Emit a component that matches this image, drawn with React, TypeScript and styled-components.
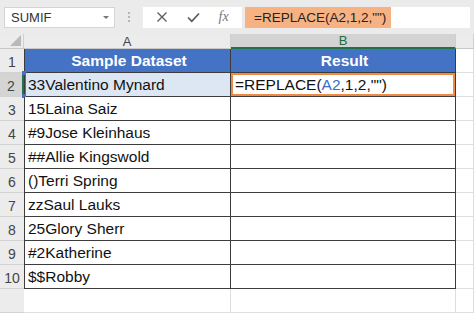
import React from 'react'
import styled, {createGlobalStyle} from 'styled-components'

const GlobalStyle = createGlobalStyle`
  html, body {
    margin: 0;
    padding: 0;
    background: #ffffff;
    font-family: "Liberation Sans", Arial, sans-serif;
  }
`

const Page = styled.div`
  width: 474px;
  height: 313px;
  overflow: hidden;
  display: flex;
  flex-direction: column;
  background: #ffffff;
`

const Toolbar = styled.div`
  height: 40px;
  display: flex;
  align-items: center;
  padding: 0 4px;
  box-sizing: border-box;
  background: #ebebeb;
`

const NameBox = styled.div`
  width: 111px;
  height: 21px;
  box-sizing: border-box;
  display: flex;
  align-items: center;
  justify-content: space-between;
  padding: 0 5px 0 6px;
  background: #ffffff;
  border: 1px solid #d4d4d4;
  font-size: 13px;
  color: #333333;
`

const Caret = styled.span`
  width: 0;
  height: 0;
  border-left: 3px solid transparent;
  border-right: 3px solid transparent;
  border-top: 3px solid #777777;
`

const Dots = styled.div`
  width: 28px;
  display: flex;
  flex-direction: column;
  align-items: center;
  gap: 2px;

  span {
    width: 2px;
    height: 2px;
    background: #b5b5b5;
  }
`

const FxButtons = styled.div`
  width: 99px;
  height: 21px;
  display: flex;
  align-items: center;
  justify-content: space-around;
  padding: 0 4px;
  box-sizing: border-box;
  background: #ffffff;
`

const FxLabel = styled.span`
  font-family: "Liberation Serif", "Times New Roman", serif;
  font-style: italic;
  font-size: 14px;
  color: #777777;
`

const FormulaBar = styled.div`
  flex: 1;
  height: 21px;
  margin-left: 3px;
  display: flex;
  align-items: stretch;
  background: #ffffff;
`

const FormulaText = styled.div`
  display: flex;
  align-items: center;
  padding: 0 5px 0 9px;
  background: #f7b283;
  font-size: 13.5px;
  color: #222222;
  white-space: nowrap;
`

const Sheet = styled.div`
  display: grid;
  grid-template-columns: 24px 207px 225px 1fr;
  grid-template-rows: 15px repeat(11, 24px);
`

const Corner = styled.div`
  background: #ececec;
  border-right: 1px solid #d0d0d0;
  border-bottom: 1px solid #c8c8c8;
  box-sizing: border-box;
  position: relative;

  &::after {
    content: '';
    position: absolute;
    right: 2px;
    bottom: 2px;
    width: 0;
    height: 0;
    border-left: 11px solid transparent;
    border-bottom: 11px solid #b9b9b9;
  }
`

const ColHead = styled.div<{$active?: boolean}>`
  display: flex;
  align-items: center;
  justify-content: center;
  box-sizing: border-box;
  font-size: 13px;
  background: ${p => (p.$active ? '#d3d3d3' : '#ececec')};
  color: ${p => (p.$active ? '#1e6b41' : '#444444')};
  border-right: 1px solid #cfcfcf;
  border-bottom: ${p => (p.$active ? '2px solid #217346' : '1px solid #c8c8c8')};
`

const RowHead = styled.div<{$active?: boolean}>`
  display: flex;
  align-items: flex-end;
  justify-content: center;
  padding-bottom: 2px;
  box-sizing: border-box;
  font-size: 14px;
  color: #444444;
  background: ${p => (p.$active ? '#d4d4d4' : '#ececec')};
  border-bottom: 1px solid #d2d2d2;
  border-right: ${p => (p.$active ? '2px solid #217346' : 'none')};
`

const Cell = styled.div<{$header?: boolean; $table?: boolean; $left?: boolean; $ref?: boolean}>`
  position: relative;
  display: flex;
  align-items: center;
  justify-content: ${p => (p.$header ? 'center' : 'flex-start')};
  padding-left: 3px;
  box-sizing: border-box;
  font-size: 15.5px;
  font-weight: ${p => (p.$header ? 700 : 400)};
  color: ${p => (p.$header ? '#ffffff' : '#111111')};
  background: ${p => (p.$header ? '#4472c4' : p.$ref ? '#dde7f4' : '#ffffff')};
  border-right: 1px solid ${p => (p.$table ? '#3c3c3c' : '#dedede')};
  border-bottom: 1px solid ${p => (p.$table ? '#3c3c3c' : '#dedede')};
  border-left: ${p => (p.$left ? '1px solid #3c3c3c' : 'none')};
  ${p => (p.$ref ? 'box-shadow: inset 1px 0 0 #4472c4;' : '')}
`

const ActiveCell = styled(Cell)`
  box-shadow: inset 0 0 0 2px #ee8a43;
  padding-left: 4px;
`

const RefA = styled.span`
  color: #3a6fc4;
`

const Handle = styled.span<{$top?: boolean}>`
  position: absolute;
  left: -3px;
  ${p => (p.$top ? 'top: -2px;' : 'bottom: -2px;')}
  width: 4px;
  height: 4px;
  background: #4472c4;
`

const CrossIcon = () => (
  <svg width="12" height="12" viewBox="0 0 12 12">
    <path d="M1.5 1.5 L10.5 10.5 M10.5 1.5 L1.5 10.5" stroke="#5a5a5a" strokeWidth="1.3" fill="none"/>
  </svg>
)

const CheckIcon = () => (
  <svg width="13" height="11" viewBox="0 0 13 11">
    <path d="M1 5.5 L4.8 9.3 L12 1.5" stroke="#5a5a5a" strokeWidth="1.7" fill="none"/>
  </svg>
)

const names = [
  '33Valentino Mynard',
  '15Laina Saiz',
  '#9Jose Kleinhaus',
  '##Allie Kingswold',
  '()Terri Spring',
  'zzSaul Lauks',
  '25Glory Sherr',
  '#2Katherine',
  '$$Robby',
]

const App = () => {
  return (
    <Page>
      <GlobalStyle/>
      <Toolbar>
        <NameBox>SUMIF<Caret/></NameBox>
        <Dots><span/><span/><span/></Dots>
        <FxButtons>
          <CrossIcon/>
          <CheckIcon/>
          <FxLabel>fx</FxLabel>
        </FxButtons>
        <FormulaBar>
          <FormulaText>=REPLACE(A2,1,2,"")</FormulaText>
        </FormulaBar>
      </Toolbar>
      <Sheet>
        <Corner/>
        <ColHead>A</ColHead>
        <ColHead $active>B</ColHead>
        <ColHead/>

        <RowHead>1</RowHead>
        <Cell $header $table $left>Sample Dataset</Cell>
        <Cell $header $table>Result</Cell>
        <Cell/>

        {names.map((name, i) => {
          const row = i + 2
          const isFirst = row === 2
          return (
            <React.Fragment key={name}>
              <RowHead $active={isFirst}>{row}</RowHead>
              <Cell $table $left $ref={isFirst}>
                {isFirst && <><Handle $top/><Handle/></>}
                {name}
              </Cell>
              {isFirst ? (
                <ActiveCell $table>=REPLACE(<RefA>A2</RefA>,1,2,"")</ActiveCell>
              ) : (
                <Cell $table/>
              )}
              <Cell/>
            </React.Fragment>
          )
        })}

        <RowHead/>
        <Cell/>
        <Cell/>
        <Cell/>
      </Sheet>
    </Page>
  )
}

export default App
